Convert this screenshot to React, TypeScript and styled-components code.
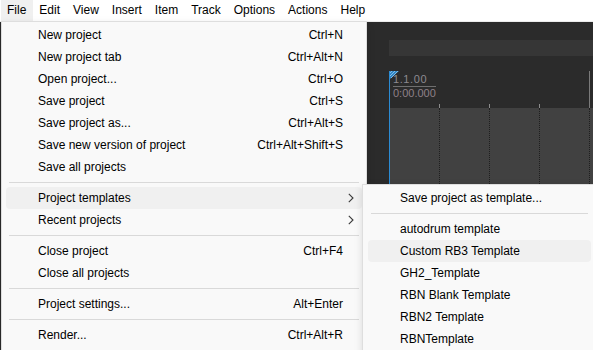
import React from 'react';
import styled, { createGlobalStyle } from 'styled-components';

const GlobalStyle = createGlobalStyle`
  html, body {
    margin: 0;
    padding: 0;
    overflow: hidden;
    background: #2b2b2b;
  }
  body {
    font-family: "Liberation Sans", Arial, sans-serif;
    font-size: 12px;
    color: #000;
  }
`;

const Screen = styled.div`
  position: relative;
  width: 593px;
  height: 350px;
  overflow: hidden;
  display: flex;
  flex-direction: column;
`;

const MenuBar = styled.div`
  display: flex;
  height: 21px;
  background: #fff;
  border-bottom: 1px solid #ececec;
  padding-left: 0.5px;
`;

const MenuBarItem = styled.div<{ $active?: boolean }>`
  padding: 0 6.5px;
  line-height: 21px;
  background: ${(p) => (p.$active ? '#f0f0f0' : 'transparent')};
`;

const Workspace = styled.div`
  flex: 1;
  display: flex;
  background: #2b2b2b;
`;

const Gutter = styled.div`
  flex: none;
  width: 389px;
`;

const Arrange = styled.div`
  flex: 1;
  display: flex;
  flex-direction: column;
`;

const TimeBand = styled.div`
  margin-top: 18px;
  height: 16px;
  background: #363636;
`;

const Ruler = styled.div`
  display: flex;
  height: 52px;
  padding-top: 15px;
  box-sizing: border-box;
`;

type Mark = 'cursor' | 'beat' | 'bar';

const RulerCell = styled.div<{ $mark: Mark }>`
  position: relative;
  flex: none;
  width: 50px;
  box-sizing: border-box;
  padding: 2px 0 0 3px;
  border-left: ${(p) => (p.$mark === 'cursor' ? '1px solid #2b8bd3' : 'none')};
  background: ${(p) =>
    p.$mark === 'beat'
      ? 'linear-gradient(#8a8a8a, #8a8a8a) left bottom / 1px 4px no-repeat'
      : p.$mark === 'bar'
      ? 'linear-gradient(#7a7a7a, #7a7a7a) left top / 1px 100% no-repeat'
      : 'none'};
`;

const Flag = styled.svg`
  position: absolute;
  left: 0;
  top: 0;
`;

const BarLabel = styled.div`
  width: 43px;
  font-size: 11px;
  line-height: 12px;
  letter-spacing: 0.6px;
  color: #8d8a90;
  padding-bottom: 1px;
  border-bottom: 1px solid #6f6f6f;
`;

const TimeLabel = styled.div`
  font-size: 11px;
  line-height: 12px;
  color: #8e8088;
`;

const Tracks = styled.div`
  flex: 1;
  display: flex;
  background: #414141;
`;

const TrackCell = styled.div<{ $mark: Mark }>`
  flex: none;
  width: 50px;
  box-sizing: border-box;
  border-left: ${(p) => (p.$mark === 'cursor' ? '1px solid #2b8bd3' : '1px dotted #1e1e1e')};
`;

const MenuPanel = styled.div<{ $left: number; $top: number; $width: number }>`
  position: absolute;
  left: ${(p) => p.$left}px;
  top: ${(p) => p.$top}px;
  width: ${(p) => p.$width}px;
  box-sizing: border-box;
  padding: 2px 0 8px;
  background: #f9f9f9;
  border: 1px solid #dedede;
  box-shadow: 0 3px 8px rgba(0, 0, 0, 0.12);
`;

const MenuRow = styled.div<{ $active?: boolean; $inset: number }>`
  display: flex;
  align-items: center;
  height: 22px;
  margin: 0 ${(p) => p.$inset}px;
  padding-left: 32px;
  border-radius: 4px;
  background: ${(p) => (p.$active ? '#f0f0f0' : 'transparent')};
  white-space: nowrap;
`;

const RowLabel = styled.span`
  flex: 1;
`;

const RowShortcut = styled.span``;

const ArrowSlot = styled.span`
  flex: none;
  width: 19px;
  padding-left: 5px;
  box-sizing: border-box;
  display: flex;
  align-items: center;
`;

const Separator = styled.div<{ $inset: number }>`
  height: 1px;
  margin: 4px ${(p) => p.$inset}px;
  background: #d9d9d9;
`;

type Entry =
  | { label: string; shortcut?: string; sub?: boolean; active?: boolean }
  | 'sep';

const fileMenu: Entry[] = [
  { label: 'New project', shortcut: 'Ctrl+N' },
  { label: 'New project tab', shortcut: 'Ctrl+Alt+N' },
  { label: 'Open project...', shortcut: 'Ctrl+O' },
  { label: 'Save project', shortcut: 'Ctrl+S' },
  { label: 'Save project as...', shortcut: 'Ctrl+Alt+S' },
  { label: 'Save new version of project', shortcut: 'Ctrl+Alt+Shift+S' },
  { label: 'Save all projects' },
  'sep',
  { label: 'Project templates', sub: true, active: true },
  { label: 'Recent projects', sub: true },
  'sep',
  { label: 'Close project', shortcut: 'Ctrl+F4' },
  { label: 'Close all projects' },
  'sep',
  { label: 'Project settings...', shortcut: 'Alt+Enter' },
  'sep',
  { label: 'Render...', shortcut: 'Ctrl+Alt+R' },
];

const templateMenu: Entry[] = [
  { label: 'Save project as template...' },
  'sep',
  { label: 'autodrum template' },
  { label: 'Custom RB3 Template', active: true },
  { label: 'GH2_Template' },
  { label: 'RBN Blank Template' },
  { label: 'RBN2 Template' },
  { label: 'RBNTemplate' },
];

const menuBarItems = ['File', 'Edit', 'View', 'Insert', 'Item', 'Track', 'Options', 'Actions', 'Help'];

const marks: Mark[] = ['cursor', 'beat', 'beat', 'beat', 'bar'];

function Chevron() {
  return (
    <svg width="6" height="10" viewBox="0 0 6 10">
      <polyline points="0.8,0.8 5,5 0.8,9.2" fill="none" stroke="#3a3a3a" strokeWidth="1.1" />
    </svg>
  );
}

function Menu({ entries, left, top, width, rowInset, sepInset }: {
  entries: Entry[];
  left: number;
  top: number;
  width: number;
  rowInset: number;
  sepInset: number;
}) {
  return (
    <MenuPanel $left={left} $top={top} $width={width}>
      {entries.map((e, i) =>
        e === 'sep' ? (
          <Separator key={i} $inset={sepInset} />
        ) : (
          <MenuRow key={i} $active={e.active} $inset={rowInset}>
            <RowLabel>{e.label}</RowLabel>
            {e.shortcut && <RowShortcut>{e.shortcut}</RowShortcut>}
            <ArrowSlot>{e.sub && <Chevron />}</ArrowSlot>
          </MenuRow>
        )
      )}
    </MenuPanel>
  );
}

export default function App() {
  return (
    <Screen>
      <GlobalStyle />
      <MenuBar>
        {menuBarItems.map((m) => (
          <MenuBarItem key={m} $active={m === 'File'}>
            {m}
          </MenuBarItem>
        ))}
      </MenuBar>
      <Workspace>
        <Gutter />
        <Arrange>
          <TimeBand />
          <Ruler>
            {marks.map((m, i) => (
              <RulerCell key={i} $mark={m}>
                {i === 0 && (
                  <>
                    <Flag width="9" height="8" viewBox="0 0 9 8">
                      <polygon points="0,0 9,0 0,8" fill="#2f86c6" />
                      <line x1="2" y1="0" x2="0" y2="2" stroke="#9cc8e8" strokeWidth="0.8" />
                      <line x1="5" y1="0" x2="0" y2="5" stroke="#9cc8e8" strokeWidth="0.8" />
                      <line x1="8" y1="0" x2="1" y2="7" stroke="#9cc8e8" strokeWidth="0.8" />
                    </Flag>
                    <BarLabel>1.1.00</BarLabel>
                    <TimeLabel>0:00.000</TimeLabel>
                  </>
                )}
              </RulerCell>
            ))}
          </Ruler>
          <Tracks>
            {marks.map((m, i) => (
              <TrackCell key={i} $mark={m} />
            ))}
          </Tracks>
        </Arrange>
      </Workspace>
      <Menu entries={fileMenu} left={1} top={21} width={366} rowInset={4} sepInset={7} />
      <Menu entries={templateMenu} left={362} top={184} width={235} rowInset={5} sepInset={8} />
    </Screen>
  );
}
